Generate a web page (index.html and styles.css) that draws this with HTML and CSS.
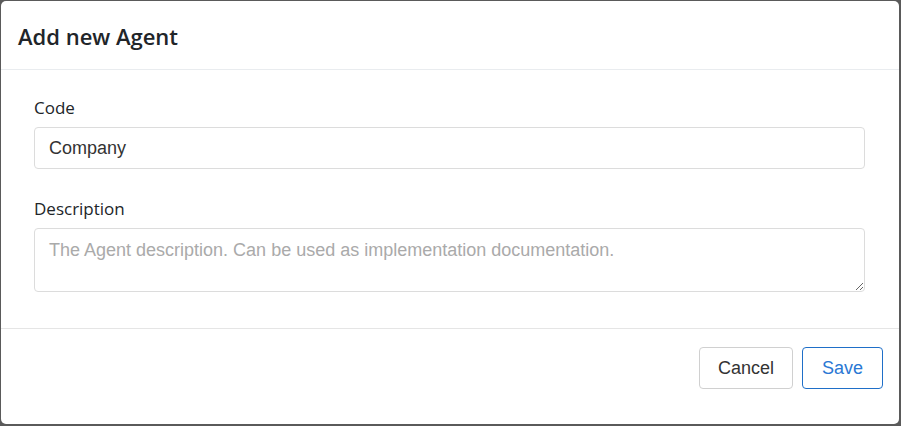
FILE: index.html
```html
<!DOCTYPE html>
<html>
<head>
<meta charset="utf-8">
<link rel="stylesheet" href="styles.css">
</head>
<body>
<div class="modal">
  <div class="modal-header">
    <h4 class="modal-title">Add new Agent</h4>
  </div>
  <div class="modal-body">
    <div class="field">
      <label class="label">Code</label>
      <input class="control" type="text" value="Company">
    </div>
    <div class="field">
      <label class="label">Description</label>
      <textarea class="control textarea" placeholder="The Agent description. Can be used as implementation documentation."></textarea>
    </div>
  </div>
  <div class="modal-footer">
    <button class="btn btn-default">Cancel</button>
    <button class="btn btn-primary">Save</button>
  </div>
</div>
</body>
</html>
```
FILE: styles.css
```css
html, body {
  margin: 0;
  padding: 0;
}
body {
  background: #5a5a5a;
  width: 901px;
  height: 426px;
  overflow: hidden;
}
.modal {
  margin: 1px 2px 2px 1px;
  height: 423px;
  background: #fff;
  border-radius: 5px;
  display: flex;
  flex-direction: column;
  box-sizing: border-box;
}
.modal-header {
  height: 69px;
  box-sizing: border-box;
  border-bottom: 1px solid #e9ecef;
  display: flex;
  align-items: center;
  padding: 1px 17px 0;
}
.modal-title {
  margin: 0;
  font-family: "Open Sans", sans-serif;
  font-weight: 600;
  font-size: 22px;
  color: #212529;
}
.modal-body {
  padding: 24px 34px 36px 33px;
  border-bottom: 1px solid #e5e5e5;
}
.field + .field {
  margin-top: 26px;
}
.label {
  display: block;
  font-family: "Open Sans", sans-serif;
  font-size: 17px;
  line-height: 24px;
  padding-top: 2px;
  color: #212529;
  margin-bottom: 7px;
}
.control {
  display: block;
  width: 100%;
  box-sizing: border-box;
  height: 42px;
  border: 1px solid #dcdcdc;
  border-radius: 4px;
  padding: 0 14px;
  font-family: "Liberation Sans", Arial, sans-serif;
  font-size: 18px;
  color: #333;
  background: #fff;
  margin: 0;
  outline: none;
}
.textarea {
  height: 64px;
  padding: 8px 14px 4px;
  line-height: 26px;
  resize: vertical;
}
.textarea::placeholder {
  color: #aaa;
}
.modal-footer {
  flex: 1;
  display: flex;
  justify-content: flex-end;
  align-items: flex-start;
  gap: 9px;
  padding: 18px 16px 0;
}
.btn {
  height: 42px;
  box-sizing: border-box;
  border-radius: 4px;
  background: #fff;
  font-family: "Liberation Sans", Arial, sans-serif;
  font-size: 18px;
  padding: 0 18px;
  margin: 0;
  cursor: pointer;
}
.btn-default {
  border: 1px solid #d0d0d0;
  color: #333;
}
.btn-primary {
  border: 1px solid #1f6fc8;
  color: #2a78d4;
  padding: 0 19px;
}
```
